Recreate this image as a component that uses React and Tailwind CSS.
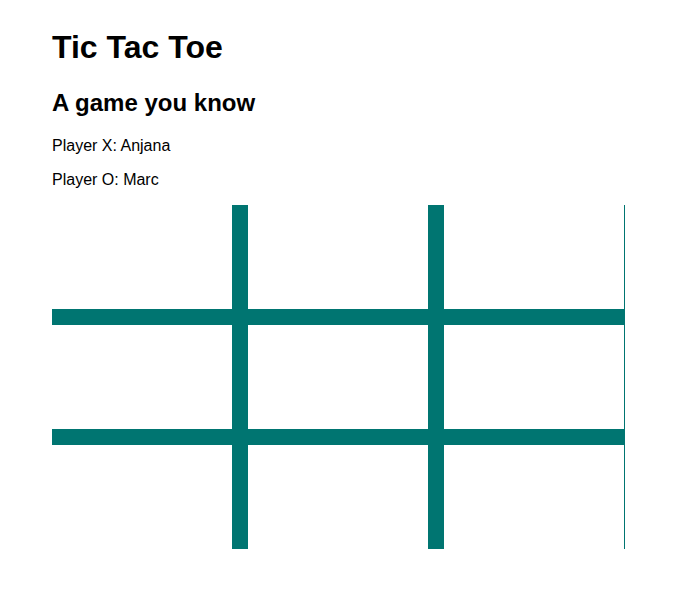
export default function App() {
  const cells = Array.from({ length: 9 });
  return (
    <div
      className="min-h-[589px] bg-white pl-[52px] pt-[29px] text-black"
      style={{ fontFamily: '"Liberation Sans", Arial, sans-serif' }}
    >
      <h1 className="m-0 text-[32px] font-bold leading-[37px]">Tic Tac Toe</h1>
      <h2 className="mt-[23px] text-[24px] font-bold leading-[28px]">A game you know</h2>
      <p className="mt-[20px] text-[16px] leading-[18px]">Player X: Anjana</p>
      <p className="mt-[16px] text-[16px] leading-[18px]">Player O: Marc</p>
      <div className="mt-[16px] w-[573px] border-r border-[#007571]">
        <div className="grid h-[344px] w-[572px] grid-cols-[180px_180px_180px] grid-rows-[104px_104px_104px] gap-4 bg-[#007571]">
          {cells.map((_, i) => (
            <div key={i} className="bg-white" />
          ))}
        </div>
      </div>
    </div>
  );
}
